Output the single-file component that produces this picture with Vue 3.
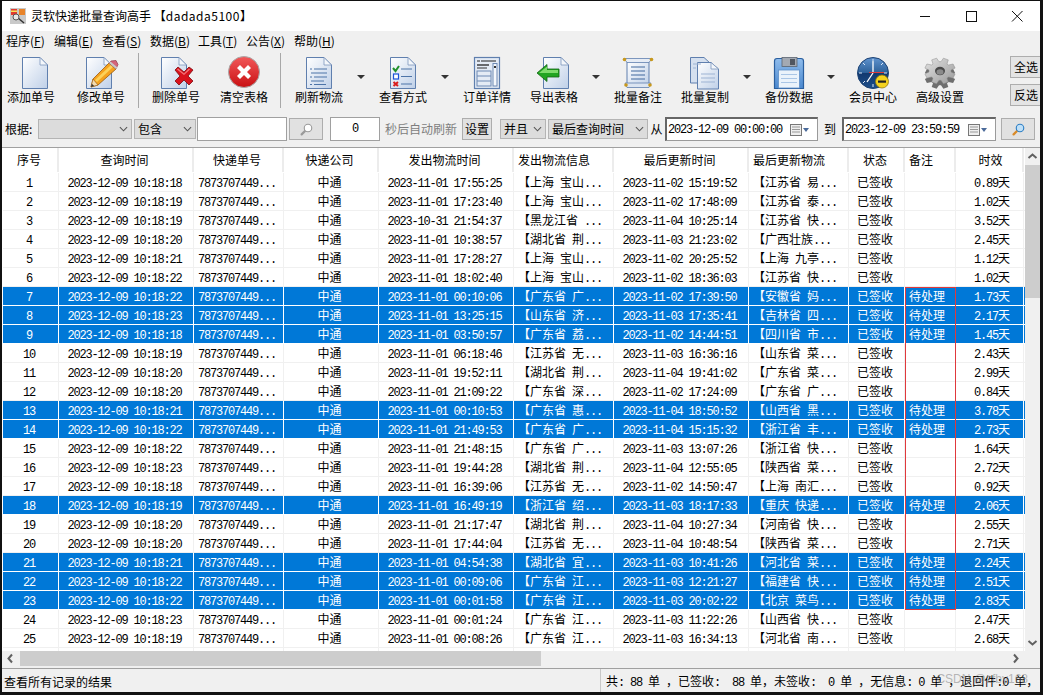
<script setup>
const menus = [['程序', 'F'], ['编辑', 'E'], ['查看', 'S'], ['数据', 'B'], ['工具', 'T'], ['公告', 'X'], ['帮助', 'H']]

const groups = [
  { cls: 'g1', items: [{ icon: 'i-new', label: '添加单号', cls: 'first' }, { icon: 'i-edit', label: '修改单号' }] },
  { cls: 'g2', items: [{ icon: 'i-del', label: '删除单号' }, { icon: 'i-clear', label: '清空表格' }] },
  {
    cls: 'g3',
    items: [
      { icon: 'i-refresh', label: '刷新物流', arrow: true },
      { icon: 'i-view', label: '查看方式', arrow: true },
      { icon: 'i-detail', label: '订单详情' },
      { icon: 'i-export', label: '导出表格', arrow: true },
      { icon: 'i-note', label: '批量备注' },
      { icon: 'i-copy', label: '批量复制', arrow: true },
      { icon: 'i-save', label: '备份数据', arrow: true },
      { icon: 'i-clock', label: '会员中心' },
      { icon: 'i-gear', label: '高级设置' }
    ]
  }
]

const heads = [
  { t: '序号' }, { t: '查询时间' }, { t: '快递单号' }, { t: '快递公司' }, { t: '发出物流时间' },
  { t: '发出物流信息', left: true }, { t: '最后更新时间' }, { t: '最后更新物流', left: true },
  { t: '状态' }, { t: '备注', left: true }, { t: '时效' }
]

// 序号 | 查询时间 | 发出时间 | 发出物流 | 更新时间 | 更新物流 | 时效 | 选中
const raw = `10:18:18|2023-11-01 17:55:25|上海 宝山|2023-11-02 15:19:52|江苏省 易|0.89|
10:18:19|2023-11-01 17:23:40|上海 宝山|2023-11-02 17:48:09|江苏省 泰|1.02|
10:18:19|2023-10-31 21:54:37|黑龙江省 |2023-11-04 10:25:14|江苏省 快|3.52|
10:18:20|2023-11-01 10:38:57|湖北省 荆|2023-11-03 21:23:02|广西壮族|2.45|
10:18:21|2023-11-01 17:28:27|上海 宝山|2023-11-02 20:25:52|上海 九亭|1.12|
10:18:22|2023-11-01 18:02:40|上海 宝山|2023-11-02 18:36:03|江苏省 快|1.02|
10:18:22|2023-11-01 00:10:06|广东省 广|2023-11-02 17:39:50|安徽省 妈|1.73|1
10:18:23|2023-11-01 13:25:15|山东省 济|2023-11-03 17:35:41|吉林省 四|2.17|1
10:18:18|2023-11-01 03:50:57|广东省 荔|2023-11-02 14:44:51|四川省 市|1.45|1
10:18:19|2023-11-01 06:18:46|江苏省 无|2023-11-03 16:36:16|山东省 菜|2.43|
10:18:20|2023-11-01 19:52:11|湖北省 荆|2023-11-04 19:41:02|广东省 菜|2.99|
10:18:20|2023-11-01 21:09:22|广东省 深|2023-11-02 17:24:09|广东省 广|0.84|
10:18:21|2023-11-01 00:10:53|广东省 惠|2023-11-04 18:50:52|山西省 黑|3.78|1
10:18:22|2023-11-01 21:49:53|广东省 广|2023-11-04 15:15:32|浙江省 丰|2.73|1
10:18:22|2023-11-01 21:48:15|广东省 广|2023-11-03 13:07:26|浙江省 快|1.64|
10:18:23|2023-11-01 19:44:28|湖北省 荆|2023-11-04 12:55:05|陕西省 菜|2.72|
10:18:18|2023-11-01 16:39:06|江苏省 无|2023-11-02 14:50:47|上海 南汇|0.92|
10:18:19|2023-11-01 16:49:19|浙江省 绍|2023-11-03 18:17:33|重庆 快递|2.06|1
10:18:20|2023-11-01 21:17:47|湖北省 荆|2023-11-04 10:27:34|河南省 快|2.55|
10:18:20|2023-11-01 17:44:04|江苏省 无|2023-11-04 10:48:54|陕西省 菜|2.71|
10:18:21|2023-11-01 04:54:38|湖北省 宜|2023-11-03 10:41:26|河北省 菜|2.24|1
10:18:22|2023-11-01 00:09:06|广东省 江|2023-11-03 12:21:27|福建省 快|2.51|1
10:18:22|2023-11-01 00:01:58|广东省 江|2023-11-03 20:02:22|北京 菜鸟|2.83|1
10:18:23|2023-11-01 00:01:24|广东省 江|2023-11-03 11:22:26|山西省 快|2.47|
10:18:19|2023-11-01 00:08:26|广东省 江|2023-11-03 16:34:13|河北省 南|2.68|`

const rows = raw.split('\n').map((line, i) => {
  const [q, st, si, ut, ui, days, sel] = line.split('|')
  return {
    sel: !!sel,
    cells: [
      { t: String(i + 1) },
      { t: '2023-12-09 ' + q },
      { t: '7873707449...' },
      { t: '中通' },
      { t: st },
      { t: '【' + si + '...', left: true },
      { t: ut },
      { t: '【' + ui + '...', left: true },
      { t: '已签收' },
      { t: sel ? '待处理' : '', left: true },
      { t: days + '天' }
    ]
  }
})

// 数字用等宽字体，中文用黑体
const parts = (s) => s.split(/([\u3000-\u303f\u4e00-\u9fff\uff00-\uffef]+)/).filter(Boolean).map((t) => ({
  t,
  mono: !/[\u3000-\u303f\u4e00-\u9fff\uff00-\uffef]/.test(t)
}))

const statusText = parts('共: 88 单 ，已签收:  88 单，未签收:  0 单 ，无信息: 0 单 ，退回件:0 单，')

const gearPoints = (() => {
  const pts = []
  for (let i = 0; i < 8; i++) {
    const a = (i * Math.PI) / 4 - Math.PI / 8
    const at = (r, d) => `${(18 + Math.cos(a + d) * r).toFixed(1)},${(16 + Math.sin(a + d) * r * 0.85).toFixed(1)}`
    pts.push(at(11, -0.3), at(15.5, -0.17), at(15.5, 0.17), at(11, 0.3))
  }
  return pts.join(' ')
})()
</script>

<template>
  <div class="window">
    <svg class="defs" aria-hidden="true">
      <defs>
        <linearGradient id="page" x1="0" y1="0" x2="1" y2="1">
          <stop offset="0" stop-color="#ffffff" />
          <stop offset="1" stop-color="#bfd0e8" />
        </linearGradient>
        <linearGradient id="redball" x1="0" y1="0" x2="0" y2="1">
          <stop offset="0" stop-color="#f2595a" />
          <stop offset="1" stop-color="#c90f12" />
        </linearGradient>
        <linearGradient id="clockface" x1="0" y1="0" x2="0" y2="1">
          <stop offset="0" stop-color="#5f93cf" />
          <stop offset="0.5" stop-color="#2c6099" />
          <stop offset="0.51" stop-color="#12396f" />
          <stop offset="1" stop-color="#1c4e8a" />
        </linearGradient>
        <linearGradient id="steel" x1="0" y1="0" x2="1" y2="1">
          <stop offset="0" stop-color="#e2e2e2" />
          <stop offset="1" stop-color="#9a9a9a" />
        </linearGradient>
        <linearGradient id="disk" x1="0" y1="0" x2="0" y2="1">
          <stop offset="0" stop-color="#8fbcec" />
          <stop offset="1" stop-color="#4a88cf" />
        </linearGradient>
        <path id="sheet" d="M5.5 2.5H23L30.500 10V33.500H5.500Z" fill="url(#page)" stroke="#5f7fae" />
        <path id="fold" d="M23 2.500V10H30.500Z" fill="#f4f7fb" stroke="#7d97bd" stroke-width=".8" />

        <symbol id="i-new" viewBox="0 0 36 36">
          <use href="#sheet" /><use href="#fold" />
        </symbol>
        <symbol id="i-edit" viewBox="0 0 36 36">
          <g transform="translate(-2 0)"><use href="#sheet" /><use href="#fold" /></g>
          <path d="M26 8L33 14L15 30L8 32L10 24Z" fill="#f4a21f" stroke="#9a5a0c" stroke-width=".8" />
          <path d="M12 25L28 10L30 12L14 27Z" fill="#fcd15a" />
          <path d="M10 24L8 32L15 30Z" fill="#f3dcb1" stroke="#9a5a0c" stroke-width=".6" />
          <path d="M8 32L8.800 28.800L11.200 31Z" fill="#333" />
          <path d="M28 6L33 5.500L35 9.500L33 14L26 8Z" fill="#d6647a" stroke="#8d3b4b" stroke-width=".7" />
          <path d="M26 8L33 14L34.500 12.500L27.500 6.500Z" fill="#c8c8c8" />
        </symbol>
        <symbol id="i-del" viewBox="0 0 36 36">
          <g transform="translate(-2 0)"><use href="#sheet" /><use href="#fold" /></g>
          <path d="M17 15L20 12L26 17L31 12L35 15L30 21L35 26L31 30L26 25L21 30L17 26L22 21Z" fill="#d9121c" stroke="#7c0b10" stroke-width=".8" />
          <path d="M20 13.500L26 18.500L31 13.500L32 14.500L26 20L19 14.500Z" fill="#f3767a" />
        </symbol>
        <symbol id="i-clear" viewBox="0 0 36 36">
          <circle cx="18" cy="17" r="15.500" fill="url(#redball)" stroke="#a9a9a9" stroke-width="1" />
          <path d="M11 13L14 10L18 14L22 10L25 13L21 17L25 21L22 24L18 20L14 24L11 21L15 17Z" fill="#fff" />
        </symbol>
        <symbol id="i-refresh" viewBox="0 0 36 36">
          <use href="#sheet" /><use href="#fold" />
          <path d="M13 14H26M10 18H26M13 22H26M10 26H23M13 29.500H25" stroke="#4d74a8" stroke-width="1.200" fill="none" />
          <path d="M9 14H11M9 22H11M9 29.500H11" stroke="#4d74a8" stroke-width="1.200" />
        </symbol>
        <symbol id="i-view" viewBox="0 0 36 36">
          <use href="#sheet" /><use href="#fold" />
          <path d="M8 13L10.500 16L14 11" stroke="#20912c" stroke-width="2" fill="none" />
          <rect x="8.500" y="19" width="5" height="5" fill="#fff" stroke="#1b52d8" stroke-width="1.200" />
          <path d="M8.500 27L13 31M13 27L8.500 31" stroke="#d91d1d" stroke-width="2" />
          <path d="M16 14H27M16 21.500H27M16 29H27" stroke="#4d74a8" stroke-width="1.200" />
        </symbol>
        <symbol id="i-detail" viewBox="0 0 36 36">
          <rect x="5.500" y="2.500" width="25" height="31" fill="#e4ebf5" stroke="#5f7fae" stroke-width="1.200" />
          <path d="M8 6H28" stroke="#222" stroke-width="1" stroke-dasharray="3 1 15 1" />
          <path d="M8 10H20" stroke="#222" stroke-width="1.300" />
          <path d="M8 13H18" stroke="#333" stroke-width="1" />
          <rect x="8" y="16" width="14" height="15" fill="none" stroke="#6c89b4" />
          <path d="M8 21H22M8 26H22" stroke="#6c89b4" />
          <rect x="24" y="8.500" width="4" height="22.500" fill="#f5f8fc" stroke="#6c89b4" />
          <rect x="25" y="11" width="2" height="2" fill="#333" />
        </symbol>
        <symbol id="i-export" viewBox="0 0 36 36">
          <g transform="translate(2 0)"><use href="#sheet" /><use href="#fold" /></g>
          <path d="M1 18L11 9.500V14H23V22H11V26.500Z" fill="#22a522" stroke="#116611" stroke-width=".8" />
          <path d="M3 18L11 11.500V15H22V18Z" fill="#7fdc6d" />
        </symbol>
        <symbol id="i-note" viewBox="0 0 36 36">
          <path d="M7 6H29V31H7Z" fill="url(#page)" stroke="#5f7fae" />
          <path d="M4 3.500H32L29 7.500H7Z" fill="#e6ecf5" stroke="#5f7fae" stroke-width=".8" />
          <path d="M5 28H31L29 32.500H7Z" fill="#dbe4f1" stroke="#5f7fae" stroke-width=".8" />
          <circle cx="4.500" cy="4.500" r="1.800" fill="#c8981c" />
          <circle cx="31.500" cy="4.500" r="1.800" fill="#c8981c" />
          <circle cx="6" cy="30" r="1.800" fill="#c8981c" />
          <circle cx="30" cy="30" r="1.800" fill="#c8981c" />
          <path d="M11 12H25M11 16H25M11 20H25M11 24H25" stroke="#41689e" stroke-width="1.200" />
        </symbol>
        <symbol id="i-copy" viewBox="0 0 36 36">
          <path d="M3.500 2.500H17L24 9V28H3.500Z" fill="#d5e0ef" stroke="#5f7fae" />
          <path d="M10.500 7.500H24L31.500 14V34H10.500Z" fill="url(#page)" stroke="#5f7fae" />
          <path d="M24 7.500V14H31.500Z" fill="#f4f7fb" stroke="#7d97bd" stroke-width=".8" />
          <path d="M14 19H28M14 23H28M14 27H28" stroke="#9db4d4" stroke-width="1.100" />
          <path d="M6 9H14M6 13H9" stroke="#9db4d4" stroke-width="1.100" />
        </symbol>
        <symbol id="i-save" viewBox="0 0 36 36">
          <path d="M3.500 6Q3.500 3.500 6 3.500H30Q32.500 3.500 32.500 6V33.500H3.500Z" fill="url(#disk)" stroke="#2a5f9f" stroke-width="1.200" />
          <rect x="11" y="2.500" width="15" height="9" fill="#a3a9b2" stroke="#5a6470" stroke-width=".8" />
          <rect x="19" y="4" width="5" height="6" fill="#50565f" />
          <rect x="7.500" y="15" width="21" height="18" fill="#eaf3fb" stroke="#5f8fc8" stroke-width=".8" />
          <path d="M10 19.500H26M10 23.500H26M10 27.500H26" stroke="#a9c6e6" stroke-width="1.100" />
        </symbol>
        <symbol id="i-clock" viewBox="0 0 36 36">
          <circle cx="18" cy="18" r="15.500" fill="url(#clockface)" stroke="#1d4273" stroke-width="1" />
          <path d="M18 4V7M18 29V32M4 18H7M29 18H32M8 8L10 10M28 8L26 10M8 28L10 26M28 28L26 26" stroke="#d9e6f5" stroke-width="1" />
          <path d="M18 18V6.500" stroke="#fff" stroke-width="1.300" />
          <path d="M18 18L12 27" stroke="#fff" stroke-width="1.300" />
          <path d="M14 17.500H29" stroke="#e23a3a" stroke-width="1" />
          <circle cx="27" cy="26.500" r="6.500" fill="#f4d21f" stroke="#927a0c" stroke-width=".8" />
          <rect x="23" y="25.500" width="8" height="2.200" fill="#222" />
        </symbol>
        <symbol id="i-gear" viewBox="0 0 36 36">
          <polygon :points="gearPoints" fill="#6e6e6e" transform="translate(0 5)" />
          <polygon :points="gearPoints" fill="url(#steel)" stroke="#8a8a8a" stroke-width=".5" />
          <ellipse cx="18" cy="16" rx="5" ry="4.200" fill="#4a4a4a" />
          <ellipse cx="18" cy="17" rx="3.500" ry="2.800" fill="#8b8b8b" />
        </symbol>
        <symbol id="i-find" viewBox="0 0 20 20">
          <path d="M3.500 16.500L9 11" stroke="currentColor" stroke-width="3" stroke-linecap="round" />
          <circle cx="12" cy="8" r="5" fill="#fff" stroke="currentColor" stroke-width="1.500" />
        </symbol>
      </defs>
    </svg>

    <header class="title-bar">
      <svg class="app-icon" viewBox="0 0 16 16">
        <rect width="16" height="16" fill="#c9c9c9" />
        <rect x="1" y="1" width="6" height="6" fill="#e23a2e" />
        <rect x="9" y="1" width="6" height="6" fill="#e8842a" />
        <rect x="1" y="2.500" width="6" height="1.500" fill="#f6e15a" />
        <path d="M8 10L14 15" stroke="#333" stroke-width="1.500" />
        <circle cx="6" cy="9" r="3" fill="#e9e9e9" stroke="#555" />
      </svg>
      <span class="title">灵软快递批量查询高手 【<span class="title-user">dadada5100</span>】</span>
      <div class="controls">
        <svg viewBox="0 0 46 30"><path d="M18 15.500H28" stroke="#111" /></svg>
        <svg viewBox="0 0 46 30"><rect x="18.500" y="10.500" width="10" height="10" fill="none" stroke="#111" /></svg>
        <svg viewBox="0 0 46 30"><path d="M18 10L28.500 20.500M28.500 10L18 20.500" stroke="#111" /></svg>
      </div>
    </header>

    <nav class="menu-bar">
      <span v-for="m in menus" :key="m[0]" class="menu-item">{{ m[0] }}(<u>{{ m[1] }}</u>)</span>
    </nav>

    <section class="toolbar">
      <template v-for="(g, gi) in groups" :key="g.cls">
        <i v-if="gi > 0" class="sep" :class="g.cls"></i>
        <div class="tool-group" :class="g.cls">
          <div v-for="t in g.items" :key="t.label" class="tool-wrap" :class="{ plain: !t.arrow }">
            <div class="tool" :class="t.cls">
              <svg class="tool-icon"><use :href="'#' + t.icon" /></svg>
              <span>{{ t.label }}</span>
            </div>
            <div v-if="t.arrow" class="drop"><i></i></div>
          </div>
        </div>
      </template>
      <div class="side-btns">
        <button class="side">全选</button>
        <button class="side">反选</button>
      </div>
    </section>

    <section class="filter">
      <span class="f-label">根据:</span>
      <div class="combo w94"><svg class="chev" viewBox="0 0 10 6"><path d="M1 1L5 5L9 1" /></svg></div>
      <div class="combo w62 ml2"><span>包含</span><svg class="chev" viewBox="0 0 10 6"><path d="M1 1L5 5L9 1" /></svg></div>
      <div class="input w90 ml1"></div>
      <button class="btn w34 ml2"><svg class="find grey"><use href="#i-find" /></svg></button>
      <div class="input w50 ml7 center"><span class="n">0</span></div>
      <span class="hint">秒后自动刷新</span>
      <button class="btn w30 ml5">设置</button>
      <div class="combo w46 ml8"><span>并且</span><svg class="chev" viewBox="0 0 10 6"><path d="M1 1L5 5L9 1" /></svg></div>
      <div class="combo w100 ml2"><span>最后查询时间</span><svg class="chev" viewBox="0 0 10 6"><path d="M1 1L5 5L9 1" /></svg></div>
      <span class="f-word w17">从</span>
      <div class="date w153">
        <span class="n">2023-12-09 00:00:00</span>
        <svg class="cal" viewBox="0 0 20 12">
          <rect x=".5" y=".5" width="11" height="11" fill="#eee" stroke="#777" />
          <path d="M2 3H10M2 5.500H10M2 8H10" stroke="#999" />
          <path d="M13 4H19L16 8Z" fill="#4a6a9a" />
        </svg>
      </div>
      <span class="f-word w24">到</span>
      <div class="date w154">
        <span class="n">2023-12-09 23:59:59</span>
        <svg class="cal" viewBox="0 0 20 12">
          <rect x=".5" y=".5" width="11" height="11" fill="#eee" stroke="#777" />
          <path d="M2 3H10M2 5.500H10M2 8H10" stroke="#999" />
          <path d="M13 4H19L16 8Z" fill="#4a6a9a" />
        </svg>
      </div>
      <button class="btn w34 ml5">
        <svg class="find" viewBox="0 0 20 20">
          <path d="M3.500 16.500L9 11" stroke="#d98a28" stroke-width="3" stroke-linecap="round" />
          <circle cx="12" cy="8" r="5" fill="#bfe0f8" stroke="#2f7fc4" stroke-width="1.500" />
        </svg>
      </button>
    </section>

    <main class="table-area">
      <div class="grid">
        <div class="row head">
          <div v-for="h in heads" :key="h.t" class="cell" :class="{ left: h.left }">{{ h.t }}</div>
        </div>
        <div class="body">
          <div v-for="(r, i) in rows" :key="i" class="row" :class="{ sel: r.sel }">
            <div v-for="(c, j) in r.cells" :key="j" class="cell" :class="{ left: c.left }"><span v-for="(p, k) in parts(c.t)" :key="k" :class="{ n: p.mono }">{{ p.t }}</span></div>
          </div>
          <div class="row">
            <div v-for="h in heads" :key="h.t" class="cell"></div>
          </div>
          <div class="mark-box"></div>
        </div>
      </div>
      <div class="vscroll">
        <svg class="sb-arrow" viewBox="0 0 15 17"><path d="M3.500 10L7.500 6.500L11.500 10" /></svg>
        <div class="v-thumb"></div>
        <div class="v-track"></div>
        <svg class="sb-arrow" viewBox="0 0 15 17"><path d="M3.500 7L7.500 10.500L11.500 7" /></svg>
      </div>
    </main>

    <div class="hscroll">
      <svg class="sb-arrow-h" viewBox="0 0 18 15"><path d="M10 3.500L6.500 7.500L10 11.500" /></svg>
      <div class="h-thumb"></div>
      <div class="h-track"></div>
      <svg class="sb-arrow-h" viewBox="0 0 18 15"><path d="M7 3.500L10.500 7.500L7 11.500" /></svg>
      <div class="h-corner"></div>
    </div>

    <footer class="status">
      <div class="st-left">查看所有记录的结果</div>
      <div class="st-right"><span v-for="(p, k) in statusText" :key="k" :class="{ n: p.mono }">{{ p.t }}</span></div>
      <span class="watermark">CSDN @zfby168</span>
    </footer>
  </div>
</template>

<style>
html, body {
  margin: 0;
  background: #111;
  overflow: hidden;
}
</style>

<style scoped>
.window {
  box-sizing: border-box;
  width: 1043px;
  height: 695px;
  display: flex;
  flex-direction: column;
  border-style: solid;
  border-color: #111;
  border-width: 1px 3px 3px 2px;
  background: #f0f0f0;
  color: #000;
  font: 12px/14px "Noto Sans CJK SC", "Noto Sans", sans-serif;
  overflow: hidden;
}
.defs {
  display: block;
  width: 0;
  height: 0;
}
.n {
  font-family: "Liberation Mono", monospace;
  font-size: 12px;
  letter-spacing: -1.2px;
  font-weight: 400;
}

.title-bar {
  flex: 0 0 30px;
  display: flex;
  align-items: center;
  background: #fff;
  padding-left: 8px;
}
.app-icon {
  width: 16px;
  height: 16px;
}
.title {
  margin-left: 5px;
  white-space: pre;
}
.title-user {
  letter-spacing: 0.5px;
}
.controls {
  margin-left: auto;
  display: flex;
}
.controls svg {
  width: 46px;
  height: 30px;
  display: block;
}

.menu-bar {
  flex: 0 0 20px;
  display: flex;
  align-items: center;
  padding-left: 4px;
}
.menu-item {
  width: 48px;
  white-space: nowrap;
}

.toolbar {
  flex: 0 0 61px;
  display: flex;
  align-items: flex-start;
  margin-left: -2px;
}
.tool-group {
  display: flex;
  padding-top: 4px;
}
.tool-group.g1 {
  gap: 8px;
}
.tool-group.g2 {
  gap: 6px;
}
.tool-wrap {
  display: flex;
}
.g3 .tool-wrap.plain {
  margin-right: 5px;
}
.tool {
  width: 62px;
  display: flex;
  flex-direction: column;
  align-items: center;
}
.tool span {
  white-space: nowrap;
  margin-top: -1px;
}
.tool-icon {
  width: 36px;
  height: 36px;
  display: block;
}
.first .tool-icon {
  margin-left: 8px;
}
.drop {
  width: 22px;
  height: 36px;
  display: flex;
  align-items: flex-end;
  justify-content: center;
}
.drop i {
  display: block;
  border-style: solid;
  border-width: 4px 4px 0;
  border-color: #333 transparent transparent;
  margin-bottom: 12px;
}
.sep {
  flex: 0 0 1px;
  height: 55px;
  margin-top: 2px;
  background: #a8a8a8;
}
.sep.g2 {
  margin-left: 6px;
  margin-right: 6px;
}
.sep.g3 {
  margin-left: 5px;
  margin-right: 7px;
}
.side-btns {
  margin-left: auto;
  margin-top: 5px;
  width: 30px;
  display: flex;
  flex-direction: column;
  gap: 6px;
}
.side {
  box-sizing: border-box;
  width: 33px;
  height: 22px;
  padding: 0 0 0 3px;
  text-align: left;
  border: 1px solid #adadad;
  background: #e4e4e4;
  font: inherit;
  color: #000;
}

.filter {
  flex: 0 0 26px;
  display: flex;
  align-items: center;
  margin-top: 4px;
  padding-bottom: 5px;
  border-bottom: 1px solid #a0a0a0;
  padding-left: 3px;
}
.f-label {
  width: 33px;
  flex: none;
}
.combo, .input, .btn, .date {
  box-sizing: border-box;
  flex: none;
}
.combo {
  height: 20px;
  display: flex;
  align-items: center;
  justify-content: space-between;
  padding: 0 3px;
  background: #dcdcdc;
  border: 1px solid #b4b4b4;
}
.chev {
  width: 9px;
  height: 6px;
  margin-left: auto;
  fill: none;
  stroke: #555;
  stroke-width: 1.2;
}
.input {
  height: 24px;
  background: #fff;
  border: 1px solid #a0a0a0;
}
.input.center {
  display: flex;
  align-items: center;
  justify-content: center;
}
.btn {
  height: 22px;
  padding: 0;
  background: #e1e1e1;
  border: 1px solid #adadad;
  font: inherit;
  color: #000;
  display: flex;
  align-items: center;
  justify-content: center;
}
.find {
  width: 15px;
  height: 15px;
  display: block;
}
.find.grey {
  color: #9a9a9a;
}
.hint {
  width: 72px;
  margin-left: 5px;
  flex: none;
  color: #7e7e7e;
  white-space: nowrap;
}
.f-word {
  flex: none;
  text-align: center;
}
.date {
  height: 24px;
  display: flex;
  align-items: center;
  padding-left: 1px;
  background: #fff;
  border: 1px solid #9a9a9a;
  border-top: 2px solid #666;
  border-left: 2px solid #666;
  white-space: pre;
}
.cal {
  width: 20px;
  height: 12px;
  margin-left: auto;
  margin-right: 7px;
}
.w17 { width: 17px; }
.w24 { width: 24px; }
.w30 { width: 30px; }
.w34 { width: 34px; }
.w46 { width: 46px; }
.w50 { width: 50px; }
.w62 { width: 62px; }
.w90 { width: 90px; }
.w94 { width: 94px; }
.w100 { width: 100px; }
.w153 { width: 153px; }
.w154 { width: 154px; }
.ml1 { margin-left: 1px; }
.ml2 { margin-left: 2px; }
.ml5 { margin-left: 5px; }
.ml7 { margin-left: 7px; }
.ml8 { margin-left: 8px; }

.table-area {
  flex: 1;
  min-height: 0;
  display: flex;
  background: #fff;
}
.grid {
  width: 1022px;
  padding-left: 1px;
  overflow: hidden;
  flex: none;
}
.row {
  display: grid;
  grid-template-columns: 56px 135px 90px 95px 135px 100px 135px 100px 56px 51px 68px;
  height: 19px;
  box-sizing: border-box;
  border-bottom: 1px solid #f0f0f0;
}
.row.head {
  height: 25px;
  background: #fff;
  border-bottom: 0;
}
.row.head .cell {
  line-height: 24px;
  border-right: 2px solid #ececec;
  margin-bottom: 1px;
  padding-right: 2px;
}
.cell {
  box-sizing: border-box;
  text-align: center;
  line-height: 17px;
  white-space: pre;
  overflow: hidden;
  padding-right: 3px;
  border-right: 1px solid #f0f0f0;
}
.cell.left {
  text-align: left;
  padding-left: 4px;
  padding-right: 0;
}
.cell:last-child {
  padding-left: 5px;
  padding-right: 0;
}
.row.sel {
  background: #0078d7;
  color: #fff;
  border-bottom-color: #fff;
}
.row.sel .cell {
  border-right-color: #fff;
}
.body {
  position: relative;
  height: 478px;
  overflow: hidden;
}
.mark-box {
  position: absolute;
  top: 114px;
  left: 902px;
  width: 51px;
  height: 323px;
  box-sizing: border-box;
  border: 1px solid #e0393c;
}

.vscroll {
  width: 15px;
  flex: none;
  display: flex;
  flex-direction: column;
  background: #f0f0f0;
}
.sb-arrow {
  flex: 0 0 17px;
  width: 15px;
  height: 17px;
  fill: none;
  stroke: #606060;
  stroke-width: 2;
}
.v-thumb {
  height: 133px;
  background: #cdcdcd;
  flex: none;
}
.v-track {
  flex: 1;
}

.hscroll {
  flex: 0 0 15px;
  display: flex;
  background: #f0f0f0;
}
.sb-arrow-h {
  flex: 0 0 18px;
  width: 18px;
  height: 15px;
  fill: none;
  stroke: #606060;
  stroke-width: 2;
}
.h-thumb {
  width: 521px;
  background: #cdcdcd;
  flex: none;
}
.h-track {
  width: 466px;
  flex: none;
}
.h-corner {
  flex: 1;
}

.status {
  position: relative;
  flex: 0 0 24px;
  box-sizing: border-box;
  margin-top: 2px;
  display: flex;
  align-items: center;
  border-top: 1px solid #a0a0a0;
  overflow: hidden;
}
.st-left {
  width: 599px;
  height: 23px;
  line-height: 25px;
  padding-left: 2px;
  box-sizing: border-box;
  flex: none;
  border-right: 1px solid #c8c8c8;
}
.st-right {
  padding-left: 5px;
  padding-top: 2px;
  white-space: pre;
}
.watermark {
  position: absolute;
  right: 12px;
  top: 3px;
  font-family: "Liberation Sans", sans-serif;
  font-size: 12px;
  color: rgba(130, 130, 130, 0.55);
}
</style>
